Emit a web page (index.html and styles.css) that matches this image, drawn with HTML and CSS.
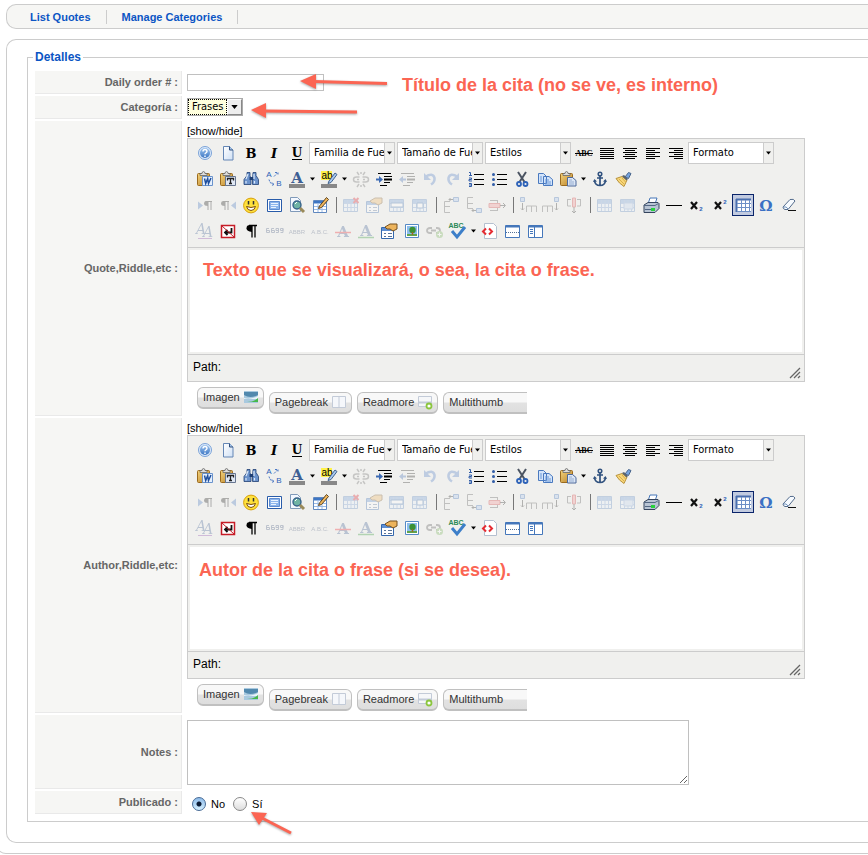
FILE: index.html
```html
<!DOCTYPE html>
<html lang="es">
<head>
<meta charset="utf-8">
<title>Daily Quotes</title>
<link rel="stylesheet" href="styles.css">
</head>
<body>
<svg class="sprite" aria-hidden="true">
  <defs>
    <linearGradient id="g-blue" x1="0" y1="0" x2="0" y2="1"><stop offset="0" stop-color="#9cc3ee"/><stop offset="1" stop-color="#3f78c4"/></linearGradient>
    <linearGradient id="g-paper" x1="0" y1="0" x2="1" y2="1"><stop offset="0" stop-color="#fff"/><stop offset="1" stop-color="#cfe0f5"/></linearGradient>
    <linearGradient id="g-gold" x1="0" y1="0" x2="1" y2="1"><stop offset="0" stop-color="#f4d27a"/><stop offset="1" stop-color="#b9822b"/></linearGradient>
  </defs>
  <symbol id="help" viewBox="0 0 20 20"><circle cx="10" cy="10" r="6.500" fill="#dbe9fa" stroke="#7ba3d8"/><circle cx="10" cy="10" r="5" fill="url(#g-blue)"/><path d="M8 8.500q0-2 2-2t2 1.800q0 1-1.200 1.700-.8.5-.8 1.300M10 12.600v1.400" fill="none" stroke="#fff" stroke-width="1.400"/></symbol>
  <symbol id="new" viewBox="0 0 20 20"><path d="M5.500 3.500h6l3.500 3.500v10h-9.500z" fill="url(#g-paper)" stroke="#6486b5"/><path d="M11.500 3.500v3.500h3.500" fill="#a8c6ea" stroke="#31507f"/></symbol>
  <symbol id="full" viewBox="0 0 20 20"><path d="M3 5.500h14M3 7.500h14M3 9.500h14M3 11.500h14M3 13.500h14M3 15.500h14" stroke="#000"/></symbol>
  <symbol id="center" viewBox="0 0 20 20"><path d="M3 5.500h14M5 7.500h10M3 9.500h14M5 11.500h10M3 13.500h14M5 15.500h10" stroke="#000"/></symbol>
  <symbol id="left" viewBox="0 0 20 20"><path d="M3 5.500h14M3 7.500h9M3 9.500h14M3 11.500h9M3 13.500h14M3 15.500h9" stroke="#000"/></symbol>
  <symbol id="right" viewBox="0 0 20 20"><path d="M3 5.500h14M8 7.500h9M3 9.500h14M8 11.500h9M3 13.500h14M8 15.500h9" stroke="#000"/></symbol>
  <symbol id="clip" viewBox="0 0 20 20"><rect x="2.500" y="4.500" width="12" height="12" rx="1" fill="url(#g-gold)" stroke="#9a6a1e"/><path d="M5 6.500v-2h2q0-2 1.500-2t1.500 2h2v2z" fill="#ddd" stroke="#666" stroke-width=".8"/></symbol>
  <symbol id="pasteword" viewBox="0 0 20 20"><use href="#clip"/><path d="M7.500 7.500h10v9h-10z" fill="#e6f0fd" stroke="#6a93cc"/><path d="M9.500 9.500l1.200 5 2-5 .8 5 2.500-5.500" fill="none" stroke="#1f4f9e" stroke-width="1.500"/></symbol>
  <symbol id="pastetext" viewBox="0 0 20 20"><use href="#clip"/><path d="M7.500 7.500h10v9h-10z" fill="#dfe7f4" stroke="#66758f"/><path d="M9.500 11.500v-2h6v2M12.500 9.500v5M11 14.500h3" fill="none" stroke="#222" stroke-width="1.300"/></symbol>
  <symbol id="paste" viewBox="0 0 20 20"><use href="#clip"/><path d="M9.500 8.500h5l3.500 3v5.500H9.500z" fill="#dbe6f6" stroke="#4d689a"/><path d="M11 11h3M11 13h5M11 15h5" stroke="#96add0"/></symbol>
  <symbol id="find" viewBox="0 0 20 20"><path d="M6 3.500h3v3l1 4v5H3v-5l3-4zM12 3.500h3v3l2.500 4v5h-6v-5z" fill="#6c93cc" stroke="#1f3f74" stroke-width=".8"/><path d="M8.500 8h4v3h-4z" fill="#1f3f74"/><path d="M7 5l-2 5M13 5v5M5 12v2.500M13.500 12v2.500" stroke="#dceafa" stroke-width="1.200"/></symbol>
  <symbol id="tabletop" viewBox="0 0 20 20"></symbol>
  <symbol id="unlink" viewBox="0 0 20 20"><path d="M8.500 8H5.500q-3 0-3 2.500t3 2.500h3M11.500 8h3q3 0 3 2.500t-3 2.500h-3M6 10.500h2M12 10.500h2M8 6L6 3M12 6l2-3M8 15l-2 3M12 15l2 3M10 5V3M10 16v2" fill="none" stroke="#666" stroke-width="1.500"/></symbol>
  <symbol id="indent" viewBox="0 0 20 20"><path d="M4 4.500h13M10 7.500h8M10 13.500h6M6 16.500h7" stroke="#000"/><path d="M10 10.500h8" stroke="#000" stroke-width="2"/><path d="M2 9.500h3V7L9 10.500 5 14v-2.500H2z" fill="#3d6bb4"/></symbol>
  <symbol id="outdent" viewBox="0 0 20 20"><path d="M4 4.500h13M10 7.500h8M10 13.500h6M6 16.500h7" stroke="#222"/><path d="M10 10.500h8" stroke="#222" stroke-width="2"/><path d="M9 9.500H6V7l-4 3.500L6 14v-2.500h3z" fill="#3d6bb4"/></symbol>
  <symbol id="undo" viewBox="0 0 20 20"><path d="M5 8q8-5 9.500 1 .5 4-3.500 6.500" fill="none" stroke="#4d7bc6" stroke-width="2.600"/><path d="M4 4v7h7z" fill="#4d7bc6"/></symbol>
  <symbol id="redo" viewBox="0 0 20 20"><path d="M15 8q-8-5-9.500 1-.5 4 3.500 6.500" fill="none" stroke="#4d7bc6" stroke-width="2.600"/><path d="M16 4v7H9z" fill="#4d7bc6"/></symbol>
  <symbol id="ol" viewBox="0 0 20 20"><path d="M8 5.500h10M8 10.500h10M8 15.500h10" stroke="#000"/><path d="M3 3.500h1.500v3M3 6.500h3M3 9h2.500v1.500H3V12h3M3 14.500h2.500v3H3M3 16h2" fill="none" stroke="#315da8"/></symbol>
  <symbol id="ul" viewBox="0 0 20 20"><path d="M8 5.500h10M8 10.500h10M8 15.500h10" stroke="#000"/><circle cx="4.500" cy="5.500" r="1.500" fill="#315da8"/><circle cx="4.500" cy="10.500" r="1.500" fill="#315da8"/><circle cx="4.500" cy="15.500" r="1.500" fill="#315da8"/></symbol>
  <symbol id="cut" viewBox="0 0 20 20"><path d="M6 3l6.500 10M14 3L7.500 13" stroke="#4b5462" stroke-width="2"/><circle cx="7" cy="15" r="2" fill="none" stroke="#2d62b8" stroke-width="1.800"/><circle cx="13.500" cy="15" r="2" fill="none" stroke="#2d62b8" stroke-width="1.800"/></symbol>
  <symbol id="copy" viewBox="0 0 20 20"><path d="M3.500 4.500h5l3 3v7h-8zM8.500 7.500h5.500l3.500 3v6h-9z" fill="#d3e4fa" stroke="#4979bf"/><path d="M5 8h2M5 10h2M5 12h2M10 11h4M10 13h6M10 15h6" stroke="#6a98d8"/></symbol>
  <symbol id="anchor" viewBox="0 0 20 20"><circle cx="10" cy="5" r="1.800" fill="none" stroke="#31527f" stroke-width="1.500"/><path d="M10 7v9.500M7 9h6M4.500 11.500q.5 5 5.500 5t5.500-5" fill="none" stroke="#31527f" stroke-width="1.700"/><path d="M3 13l1.500-3L7 12.500zM17 13l-1.500-3-2.500 2.500z" fill="#31527f"/></symbol>
  <symbol id="cleanup" viewBox="0 0 20 20"><path d="M12 8l3.500-4.500 2.500 1-2.500 5z" fill="#76a4df" stroke="#48658c"/><path d="M3 9.500l6-2 5 3.500-3 6.500q-5-3-8-8z" fill="#f8d779" stroke="#b9933d"/><path d="M9 7l2-1 4 4-1.500 1.500z" fill="#5c6670"/><path d="M6 10l5 5M9 9l3.500 4" stroke="#d9ae4c"/></symbol>
  <symbol id="ltr" viewBox="0 0 20 20"><path d="M3 6.500l5 4-5 4z" fill="#4475bf"/><path d="M13 6v9M16 6v9M10.500 6.500H17" stroke="#111"/><path d="M13 6h-2q-2 0-2 2.500t4 2.500z" fill="#111"/></symbol>
  <symbol id="rtl" viewBox="0 0 20 20"><path d="M18 6.500l-5 4 5 4z" fill="#4475bf"/><path d="M7 6v9M10 6v9M5 6.500h6" stroke="#111"/><path d="M7 6H5Q3 6 3 8.500T7 11z" fill="#111"/></symbol>
  <symbol id="smile" viewBox="0 0 20 20"><circle cx="10" cy="10.500" r="7.400" fill="#ffe13b" stroke="#d7a010"/><path d="M7.500 6v3.500M12.500 6v3.500" stroke="#333" stroke-width="1.500"/><path d="M5.500 11.500q4.500 2 9 0-1 4-4.500 4t-4.500-4z" fill="#fff" stroke="#7a4b08"/></symbol>
  <symbol id="media" viewBox="0 0 20 20"><path d="M3.500 4.500h14v12h-14z" fill="#fff" stroke="#285ba9"/><path d="M5.500 6.500h10v8h-10z" fill="#8db5ec" stroke="#5d8bd0"/><path d="M7 8.500h7M7 10.500h7M7 12.500h5" stroke="#e9f3ff"/></symbol>
  <symbol id="preview" viewBox="0 0 20 20"><path d="M3.500 2.500h7l3 3v11h-10z" fill="#f4f8ff" stroke="#809ab9"/><circle cx="10" cy="10" r="4" fill="#6fb3a4" stroke="#37628a" stroke-width="1.400"/><path d="M13 13l4 4" stroke="#9a8a5a" stroke-width="3"/><path d="M8 9l2-2" stroke="#fff"/></symbol>
  <symbol id="edittable" viewBox="0 0 20 20"><path d="M3.500 5.500h13v12h-13z" fill="#fff" stroke="#6088bf"/><path d="M4 6h12v2.500H4z" fill="#3d76c4"/><path d="M4 11.500h12M4 14.500h12M8 8v9M12 8v9" stroke="#9bbce7"/><path d="M9.500 11l7-8.500 2 2-7 8-3 1z" fill="#efb55b" stroke="#5b4523"/></symbol>
  <symbol id="grid" viewBox="0 0 20 20"><path d="M2.500 4.500h14v12h-14z" fill="#e7f0fc" stroke="#5b84bf"/><path d="M3 5h13v3H3z" fill="#6f9bd8"/><path d="M3 8.500h13M3 12.500h13M6.500 5v11M10 5v11M13.500 5v11" stroke="#7da1d5"/></symbol>
  <symbol id="guides" viewBox="0 0 20 20"><path d="M3 4h15v13H3z" fill="#fff"/><path d="M3 4.500h15M3.500 4v13" stroke="#4a6fae" stroke-width="2"/><path d="M4 8.500h14M4 12.500h14M4 16.500h14M8.500 5v12M12.500 5v12M16.500 5v12" stroke="#6d8fc6"/></symbol>
  <symbol id="tabledel" viewBox="0 0 20 20"><use href="#grid"/><path d="M12.500 3l5 5M17.500 3l-5 5" stroke="#db1620" stroke-width="2"/></symbol>
  <symbol id="props" viewBox="0 0 20 20"><path d="M2.500 6.500h12v11h-12z" fill="#fff" stroke="#3467ad"/><path d="M3 7h11v3H3z" fill="#5f8fd3"/><path d="M5 12.500h2M9 12.500h4M5 15.500h2M9 15.500h4" stroke="#5a7398"/><path d="M6 6l5-3h7v5l-4 2-3-2H8z" fill="#edb45c" stroke="#76511f"/></symbol>
  <symbol id="rowp" viewBox="0 0 20 20"><use href="#grid"/><path d="M4 8h12v4H4z" fill="#fff" stroke="#3568ac"/></symbol>
  <symbol id="cellp" viewBox="0 0 20 20"><use href="#grid"/><path d="M7 8h6v5H7z" fill="#fff" stroke="#3568ac"/></symbol>
  <symbol id="rowbefore" viewBox="0 0 20 20"><path d="M9 6.500H3.500v11M3.500 11.500H9M3.500 17.500H9" fill="none" stroke="#555"/><path d="M12.500 2.500h5v4h-5z" fill="#a7c4ef" stroke="#386ab5"/><path d="M12 4.500H8M9.500 3L8 4.500 9.500 6" fill="none" stroke="#222"/></symbol>
  <symbol id="rowafter" viewBox="0 0 20 20"><path d="M9 13.500H3.500v-11M3.500 8.500H9M3.500 2.500H9" fill="none" stroke="#555"/><path d="M12.500 13.500h5v4h-5z" fill="#a7c4ef" stroke="#386ab5"/><path d="M12 15.500H8M9.500 14L8 15.500 9.500 17" fill="none" stroke="#222"/></symbol>
  <symbol id="rowdel" viewBox="0 0 20 20"><path d="M3 5.500h7M3 15.500h7M10.500 5v3M10.500 13v3" stroke="#555"/><path d="M2 8.500h11v4H2z" fill="#f58f8f" stroke="#ce3838"/><path d="M13 10.500h5M16 8l2.500 2.500L16 13" fill="none" stroke="#222"/></symbol>
  <symbol id="colbefore" viewBox="0 0 20 20"><path d="M8.500 17v-6h10v6M13.500 11v6" fill="none" stroke="#555"/><path d="M2.500 2.500h4v4h-4z" fill="#a7c4ef" stroke="#386ab5"/><path d="M4.500 8v7M3 13.500L4.500 15 6 13.500" fill="none" stroke="#222"/></symbol>
  <symbol id="colafter" viewBox="0 0 20 20"><path d="M1.500 17v-6h10v6M6.500 11v6" fill="none" stroke="#555"/><path d="M13.500 2.500h4v4h-4z" fill="#a7c4ef" stroke="#386ab5"/><path d="M15.500 8v7M14 13.500l1.500 1.500 1.500-1.500" fill="none" stroke="#222"/></symbol>
  <symbol id="coldel" viewBox="0 0 20 20"><path d="M3.500 4v7H7M16.500 4v7H13M3 4.500h4M13 4.500h4" fill="none" stroke="#555"/><path d="M8.500 3h3v9h-3z" fill="#f58f8f" stroke="#ce3838"/><path d="M10 12v6M8 16l2 2 2-2" fill="none" stroke="#222"/></symbol>
  <symbol id="merge" viewBox="0 0 20 20"><use href="#grid"/><path d="M6 8h9v6H6z" fill="#c1d5f1" stroke="#7da1d5"/></symbol>
  <symbol id="print" viewBox="0 0 20 20"><path d="M7 9l2-6h7l-2 6z" fill="#fff" stroke="#4777b8"/><path d="M3 10l4-2.500h10l1 1v5l-4 4H3z" fill="#b8c4d4" stroke="#34445d"/><path d="M3 10.500h11l3.500-2M4 14.500h9" fill="none" stroke="#536783"/><path d="M10 13h4v3h-4z" fill="#27d13d"/></symbol>
  <symbol id="hr" viewBox="0 0 20 20"><path d="M2 10.500h16" stroke="#000"/></symbol>
  <symbol id="eraser" viewBox="0 0 20 20"><path d="M4 12l7-7.500q4-1 5 1.500l-7 8.500H6q-2-.5-2-2.500z" fill="#f7fbff" stroke="#536b8c"/><path d="M4.500 12q3-1 4.500 2" fill="none" stroke="#6d90bc"/><path d="M9 15.500h8" stroke="#111"/></symbol>
  <symbol id="visualchars" viewBox="0 0 20 20"><path d="M3.500 4.500h13v12h-13z" fill="#fff" stroke="#c61c27" stroke-width="1.500"/><path d="M13.500 7v4.500H7M9.500 9L7 11.500 9.500 14" fill="none" stroke="#111" stroke-width="1.800"/><path d="M4 5l12 11" stroke="#c61c27"/></symbol>
  <symbol id="para" viewBox="0 0 20 20"><path d="M11 5v11.500M14 5v11.500M8 4.500h8" fill="none" stroke="#000" stroke-width="1.300"/><path d="M11 4H9Q5.500 4 5.500 7.300T11 11z" fill="#000"/></symbol>
  <symbol id="cite" viewBox="0 0 20 20"><path d="M5 7.500H2.500v4h3v-2h-3M10 7.500H7.500v4h3v-2h-3M12 7.500h2.500v2H12zm2.500 0v4H12M16.500 7.500H19v2h-2.500zm2.500 0v4h-2.500" fill="none" stroke="#4b5d82"/></symbol>
  <symbol id="image" viewBox="0 0 20 20"><path d="M3.500 3.500h13v13h-13z" fill="#fff" stroke="#5589c5"/><path d="M5 5h10v10H5z" fill="#8bbdeb"/><path d="M5 13h10v2H5z" fill="#60a44c"/><circle cx="10.500" cy="9" r="3.200" fill="#3b9136"/><path d="M10.500 11v3" stroke="#9a6824" stroke-width="1.500"/></symbol>
  <symbol id="link" viewBox="0 0 20 20"><path d="M7 7H5Q2 7 2 9.500T5 12h2M11 7h1q3 0 3 2.500T12 12h-1M6 9.500h5" fill="none" stroke="#555" stroke-width="1.800"/><circle cx="14.500" cy="13.500" r="3.500" fill="#70af51"/><path d="M14.500 11.500v4M12.500 13.500h4" stroke="#fff"/></symbol>
  <symbol id="code" viewBox="0 0 20 20"><path d="M4.500 2.500h9l3 3v12h-12z" fill="#fff" stroke="#b4c0cf"/><path d="M6 7.500L3 10.500l3 3M9 7.500l3 3-3 3" fill="none" stroke="#e52c32" stroke-width="2"/></symbol>
  <symbol id="pagebreak" viewBox="0 0 20 20"><path d="M2.500 4.500h14v12h-14z" fill="#fff" stroke="#4577ba"/><path d="M3 5.500h13" stroke="#4577ba" stroke-width="2"/><path d="M3 11.500h13" stroke="#547298" stroke-dasharray="1 1"/></symbol>
  <symbol id="layout" viewBox="0 0 20 20"><path d="M2.500 4.500h14v12h-14z" fill="#fff" stroke="#4577ba"/><path d="M3 5.500h13" stroke="#4577ba" stroke-width="2"/><path d="M8.500 5v11M4 8.500h3M4 10.500h3M4 12.500h3" stroke="#4577ba"/></symbol>
  <symbol id="pic" viewBox="0 0 16 16"><path d="M1 2h14v12H1z" fill="#a9c9df"/><path d="M1 3h14v3q-8 4-14 0z" fill="#5289ae"/><path d="M1 9q6 2 14-2v3H1z" fill="#eaf5fa"/><path d="M4 13q7 0 11-4v4z" fill="#46b84c"/></symbol>
  <symbol id="split" viewBox="0 0 16 16"><path d="M1.500 2.500h13v11h-13z" fill="#f5f7fb" stroke="#c3cbd8"/><path d="M8 3v10" stroke="#c3cbd8"/></symbol>
  <symbol id="more" viewBox="0 0 16 16"><path d="M1.500 2.500h13v10h-13z" fill="#f6f7f9" stroke="#c3cbd8"/><path d="M2 8.500h12" stroke="#c3cbd8" stroke-width="2"/><circle cx="12" cy="12" r="2.500" fill="#fff" stroke="#8cc63f" stroke-width="1.800"/></symbol>
  <symbol id="down" viewBox="0 0 7 6"><path d="M1 1.500h5L3.500 4.500z" fill="#000"/></symbol>
</svg>

<div class="page">
  <nav class="submenu">
    <a href="#">List Quotes</a>
    <a href="#">Manage Categories</a>
  </nav>

  <main class="panel">
    <form>
      <fieldset class="details">
        <legend>Detalles</legend>
        <div class="row">
          <label class="key" for="order">Daily order # :</label>
          <div class="value">
            <input class="order" id="order" type="text">
            <svg class="arrow arrow-order" viewBox="0 0 90 20" aria-hidden="true"><path class="head" d="M0 9L16 2v15z"/><path class="tail" d="M14 9.500l73 2"/></svg>
            <p class="note note-title">Título de la cita (no se ve, es interno)</p>
          </div>
        </div>
        <div class="row">
          <label class="key" for="category">Categoría :</label>
          <div class="value">
            <span class="category"><select id="category"><option>Frases</option></select><span class="bevel"><svg viewBox="0 0 7 6" aria-hidden="true"><use href="#down"/></svg></span></span>
            <svg class="arrow arrow-category" viewBox="0 0 110 20" aria-hidden="true"><path class="head" d="M0 9L15 2v15z"/><path class="tail" d="M13 10l93 1"/></svg>
          </div>
        </div>
        <div class="row">
          <span class="key">Quote,Riddle,etc :</span>
          <div class="value editor-field" data-label="Quote" data-text="Texto que se visualizará, o sea, la cita o frase."></div>
        </div>
        <div class="row">
          <span class="key">Author,Riddle,etc:</span>
          <div class="value editor-field" data-label="Author" data-text="Autor de la cita o frase (si se desea)."></div>
        </div>
        <div class="row">
          <label class="key" for="notes">Notes :</label>
          <div class="value notes-field"><textarea id="notes"></textarea></div>
        </div>
        <div class="row">
          <span class="key">Publicado :</span>
          <div class="value radios">
            <input type="radio" name="published" id="pub-no" checked><label for="pub-no">No</label>
            <input type="radio" name="published" id="pub-yes"><label for="pub-yes">Sí</label>
            <svg class="arrow arrow-published" viewBox="0 0 44 26" aria-hidden="true"><path class="head" d="M0 2l16 1-8 12z"/><path class="tail" d="M11 8l29 15"/></svg>
          </div>
        </div>
      </fieldset>
    </form>
  </main>
</div>

<template id="editor-template">
  <a class="toggle" href="#">[show/hide]</a>
  <div class="editor">
    <div class="toolbar" role="toolbar"></div>
    <div class="frame"><div class="content" contenteditable="true" role="textbox" aria-multiline="true"></div></div>
    <div class="status"><span>Path:</span><svg class="grip" viewBox="0 0 12 12" aria-hidden="true"><path d="M1 11L11 1M5 11l6-6M9 11l2-2"/></svg></div>
  </div>
  <div class="extras">
    <button class="raised" type="button">Imagen<svg aria-hidden="true"><use href="#pic"/></svg></button>
    <button type="button">Pagebreak<svg aria-hidden="true"><use href="#split"/></svg></button>
    <button type="button">Readmore<svg aria-hidden="true"><use href="#more"/></svg></button>
    <button class="open" type="button">Multithumb</button>
  </div>
</template>
<script src="script.js"></script>
</body>
</html>
```
FILE: styles.css
```css
body {
  margin: 0;
  background: #fff;
  color: #000;
  font: 11px/14px "Liberation Sans", Arial, sans-serif;
  overflow-x: hidden;
}

.sprite { position: absolute; width: 0; height: 0; }

.page {
  margin-left: -4px;
  padding: 4px 0 10px 9px;
  border: solid #ccc;
  border-width: 0 0 1px 1px;
  border-bottom-left-radius: 10px;
}

.submenu {
  display: flex;
  align-items: center;
  height: 23px;
  padding-left: 8px;
  border: 1px solid #ccc;
  border-right: 0;
  border-radius: 10px 0 0 10px;
  background: #f6f6f4;
}

.submenu a {
  padding: 0 15px;
  border-right: 1px solid #ccc;
  color: #0b55c4;
  font-weight: bold;
  text-decoration: none;
}

.panel {
  margin-top: 10px;
  padding: 10px 0 20px 20px;
  border: 1px solid #ccc;
  border-right: 0;
  border-radius: 10px 0 0 10px;
}

.details {
  margin: 0;
  padding: 7px 0 7px 5px;
  border: 1px solid #ccc;
  border-right: 0;
}

.details legend {
  padding: 0 2px;
  color: #0b55c4;
  font-size: 12px;
  font-weight: bold;
}

.row {
  display: grid;
  grid-template-columns: 147px minmax(0, 1fr);
  column-gap: 5px;
  min-height: 23px;
  margin-left: 2px;
}

.row + .row { margin-top: 2px; }

.key {
  display: flex;
  align-items: center;
  justify-content: flex-end;
  padding-right: 3px;
  border: solid #e9e9e9;
  border-width: 0 1px 1px 0;
  background: #f6f6f4;
  color: #666;
  font-weight: bold;
}

.value { position: relative; }

.order {
  box-sizing: border-box;
  display: block;
  width: 137px;
  height: 17px;
  margin-top: 3px;
  border: 1px solid silver;
}

.category {
  display: inline-flex;
  box-sizing: border-box;
  height: 18px;
  margin-top: 2px;
  border: 1px solid #aaa;
  background: #ffffdd;
}

.category select {
  appearance: none;
  width: 39px;
  padding: 0 0 0 3px;
  border: 1px dotted #000;
  border-radius: 0;
  background: #ffffdd;
  font: 11px/14px "DejaVu Sans Condensed", "Open Sans", sans-serif;
}

.bevel {
  box-sizing: border-box;
  display: grid;
  place-items: center;
  width: 15px;
  border: 1px solid;
  border-color: #fff #888 #888 #fff;
  background: #eee;
}

.bevel svg { width: 9px; height: 8px; }

.arrow {
  position: absolute;
  overflow: visible;
  filter: drop-shadow(0 1px 1px rgb(0 0 0 / 35%));
  pointer-events: none;
}

.head { fill: #fb6553; }
.tail { fill: none; stroke: #fb6553; stroke-width: 3; }
.arrow-order { left: 113px; top: 1px; width: 90px; height: 20px; }
.arrow-category { left: 64px; top: 5px; width: 110px; height: 20px; }
.arrow-published { left: 64px; top: 19px; width: 44px; height: 26px; }

.note {
  margin: 0;
  color: #fb6553;
  font-size: 18px;
  font-weight: bold;
  line-height: 22px;
}

.note-title { position: absolute; left: 215px; top: 3px; white-space: nowrap; }

.editor-field { padding: 3px 0 2px; }

.toggle { display: block; color: #000; text-decoration: none; }

.editor {
  box-sizing: border-box;
  max-width: 618px;
  border: 1px solid #ccc;
  background: #f0f0ee;
}

.toolbar { padding: 1px 6px 3px; }
.tools { display: flex; align-items: center; height: 26px; }

.tool {
  box-sizing: border-box;
  display: flex;
  align-items: center;
  flex: none;
  width: 22px;
  height: 22px;
  margin: 0 1px 0 0;
  padding: 0;
  border: 1px solid transparent;
  background: none;
}

.tool svg { flex: none; width: 20px; height: 20px; }
.tool.menu { width: 31px; }
.tool.menu .caret { width: 7px; height: 6px; margin-left: 2px; }
.tool:disabled .icon { opacity: 0.3; }
.tool.active { border-color: #0a246a; background: #c2cbe0; }

.divider { flex: none; width: 1px; height: 16px; margin: 0 3px 0 4px; background: #777; }

.pick {
  box-sizing: border-box;
  display: flex;
  flex: none;
  width: 86px;
  height: 22px;
  margin-right: 2px;
  border: 1px solid #ccc;
  background: #fff;
}

.pick select {
  appearance: none;
  flex: 1;
  min-width: 0;
  padding: 0 0 0 4px;
  border: 0;
  border-radius: 0;
  background: #fff;
  color: #000;
  font: 11px/20px "DejaVu Sans Condensed", "Open Sans", sans-serif;
}

.pick .drop {
  display: grid;
  place-items: center;
  width: 9px;
  border-left: 1px solid #ccc;
  background: #f0f0ee;
}

.drop svg { width: 7px; height: 6px; }

.icon text { text-anchor: middle; }
.glyph { font: bold 13px "DejaVu Serif", serif; }
.glyph.small { font-size: 12px; }
.glyph.slant { font-style: italic; }
.abc { font: bold 8px "Liberation Serif", serif; }
.letter { font: bold 15px "DejaVu Serif", serif; fill: #3d5f94; }
.letter.soft { font: italic 14px "DejaVu Serif", serif; }
.tiny { font: 8px "Liberation Sans", sans-serif; }
.blue { fill: #2e61b6; }
.ab { font: 10px "Liberation Sans", sans-serif; }
.num { font: bold 6px "Liberation Sans", sans-serif; }
.omega { font: bold 15px "DejaVu Serif", serif; fill: #3b70c4; }
.micro { font: 6px "Liberation Sans", sans-serif; fill: #3f4f72; }
.spell { font: bold 7px "Liberation Sans", sans-serif; fill: #2b8a57; }

.frame { padding: 2px; border-top: 1px solid #ccc; }
.content { box-sizing: border-box; min-height: 102px; padding: 9px 13px; background: #fff; outline: 0; }
.content.near { padding: 12px 9px; }

.status {
  display: flex;
  justify-content: space-between;
  box-sizing: border-box;
  height: 27px;
  padding: 5px 3px 2px 5px;
  border-top: 1px solid #ccc;
  font-size: 12px;
}

.grip { align-self: flex-end; width: 12px; height: 12px; stroke: #666; stroke-width: 1.3; fill: none; }

.extras { display: flex; gap: 5px; margin: 10px 0 0 10px; }

.extras button {
  box-sizing: border-box;
  display: flex;
  align-items: center;
  gap: 3px;
  height: 22px;
  padding: 0 4px 1px 5px;
  border: 1px solid #c0c0c0;
  border-bottom-width: 2px;
  border-radius: 6px;
  background: linear-gradient(#f8f8f8 0 45%, #e2e2e2 55%, #dedede);
  color: #333;
  font: 11px/14px "Liberation Sans", Arial, sans-serif;
}

.extras svg { width: 16px; height: 16px; }
.extras .raised { position: relative; top: -5px; }
.extras .open { width: 84px; border-right: 0; border-radius: 6px 0 0 6px; }

.notes-field { padding: 5px 0 4px; }

.notes-field textarea {
  box-sizing: border-box;
  display: block;
  width: 100%;
  max-width: 502px;
  height: 65px;
  border: 1px solid silver;
}

.radios { display: flex; align-items: center; padding: 2px 0 0 5px; }

.radios input {
  appearance: none;
  box-sizing: border-box;
  width: 14px;
  height: 14px;
  margin: 0 5px 0 0;
  border: 1px solid #888;
  border-radius: 50%;
  background: linear-gradient(#fff, #ddd);
}

.radios input:checked {
  border-color: #476b96;
  background: radial-gradient(circle, #0b1b35 0 2px, transparent 3px), linear-gradient(#8dbbe9, #d4efff);
}

.radios label { margin-right: 8px; }
```
FILE: script.js
```js
// Toolbar rows. Suffixes: "-" unavailable, "+" has a menu, "*" switched on.
// "|" is a divider; an entry starting with "=" is a drop-down list.
const rows = [
  ['help', 'new', 'bold', 'italic', 'underline', '=Familia de Fuente', '=Tamaño de Fuente', '=Estilos',
    'strike', 'full', 'center', 'left', 'right', '=Formato'],
  ['pasteword', 'pastetext', 'find', 'replace', 'forecolor+', 'backcolor+', 'unlink-', 'indent', 'outdent-',
    'undo-', 'redo-', 'ol', 'ul', 'cut', 'copy', 'paste+', 'anchor', 'cleanup'],
  ['ltr-', 'rtl-', 'smile', 'media', 'preview', 'edittable', '|', 'tabledel-', 'props-', 'rowp-', 'cellp-', '|',
    'rowbefore-', 'rowafter-', 'rowdel-', '|', 'colbefore-', 'colafter-', 'coldel-', '|', 'grid-', 'merge-',
    'print', 'hr', 'sub', 'sup', 'guides*', 'omega', 'eraser'],
  ['styleprops-', 'visualchars', 'para', 'cite-', 'abbr-', 'acronym-', 'del-', 'ins-', 'props', 'image', 'link-',
    'spell+', 'code', 'pagebreak', 'layout'],
];

// Icons that contain letters.
const lettered = {
  bold: '<text x="10" y="15" class="glyph">B</text>',
  italic: '<text x="10" y="15" class="glyph slant">I</text>',
  underline: '<text x="10" y="14" class="glyph small">U</text><path d="M5 16.500h10" stroke="#000"/>',
  strike: '<text x="10" y="13" class="abc">ABC</text><path d="M1 10.500h18" stroke="#000"/>',
  replace: '<text x="5" y="8" class="tiny blue">A</text><text x="15" y="17" class="tiny blue">B</text>' +
    '<path d="M10 7.500l4-4m-3 0h3v3M5 10.500l1 3 4 2m-2-2l2 2-2.500 1" fill="none" stroke="#4d79c5" stroke-dasharray="2 1"/>',
  forecolor: '<text x="10" y="14" class="letter">A</text><path d="M2 15h16v4H2z" fill="#888"/>',
  backcolor: '<path d="M2 2h11v9H2z" fill="#fff34a"/><text x="8" y="10" class="ab">ab</text>' +
    '<path d="M10 12l6-8 2 1.500-6 8-3 1z" fill="#a9c8ef" stroke="#42648f"/><path d="M2 15h16v4H2z" fill="#888"/>',
  sub: '<path d="M4 7l6 7M10 7l-6 7" stroke="#111" stroke-width="2.200"/><text x="14" y="16" class="num blue">2</text>',
  sup: '<path d="M5 7l6 7M11 7l-6 7" stroke="#111" stroke-width="2.200"/><text x="15" y="9" class="num blue">2</text>',
  omega: '<text x="10" y="16" class="omega">Ω</text>',
  styleprops: '<text x="6" y="13" class="letter soft">A</text><text x="13" y="16" class="letter soft">A</text><path d="M3 17.500h14" stroke="#84a"/>',
  abbr: '<text x="10" y="13" class="micro">ABBR</text>',
  acronym: '<text x="10" y="13" class="micro">A.B.C.</text>',
  del: '<text x="10" y="16" class="letter">A</text><path d="M2 11.500h16" stroke="#ef1c24" stroke-width="1.500"/>',
  ins: '<text x="10" y="15" class="letter">A</text><path d="M2 16.500h16" stroke="#25942c" stroke-width="1.500"/>',
  spell: '<text x="8" y="7" class="spell">ABC</text><path d="M4 10l5 6 8-10" fill="none" stroke="#3d7fc9" stroke-width="3"/>',
};

const caret = '<svg class="caret" viewBox="0 0 7 6" aria-hidden="true"><use href="#down"/></svg>';

function tool(entry) {
  if (entry === '|') return '<span class="divider"></span>';
  if (entry[0] === '=') {
    const label = entry.slice(1);
    return `<span class="pick"><select aria-label="${label}"><option>${label}</option></select><span class="drop">${caret}</span></span>`;
  }
  const name = entry.replace(/[-+*]$/, '');
  const menu = entry.endsWith('+');
  const state = menu ? ' menu' : entry.endsWith('*') ? ' active' : '';
  const drawing = lettered[name] || `<use href="#${name}"/>`;
  return `<button type="button" class="tool${state}" aria-label="${name}"${entry.endsWith('-') ? ' disabled' : ''}>` +
    `<svg class="icon" viewBox="0 0 20 20" aria-hidden="true">${drawing}</svg>${menu ? caret : ''}</button>`;
}

document.querySelectorAll('.editor-field').forEach((field, index) => {
  field.append(document.getElementById('editor-template').content.cloneNode(true));
  field.querySelector('.toolbar').innerHTML =
    rows.map((row) => `<div class="tools">${row.map(tool).join('')}</div>`).join('');
  const content = field.querySelector('.content');
  content.setAttribute('aria-label', field.dataset.label);
  content.classList.toggle('near', index === 1);
  const note = document.createElement('p');
  note.className = 'note';
  note.textContent = field.dataset.text;
  content.append(note);
});
```
